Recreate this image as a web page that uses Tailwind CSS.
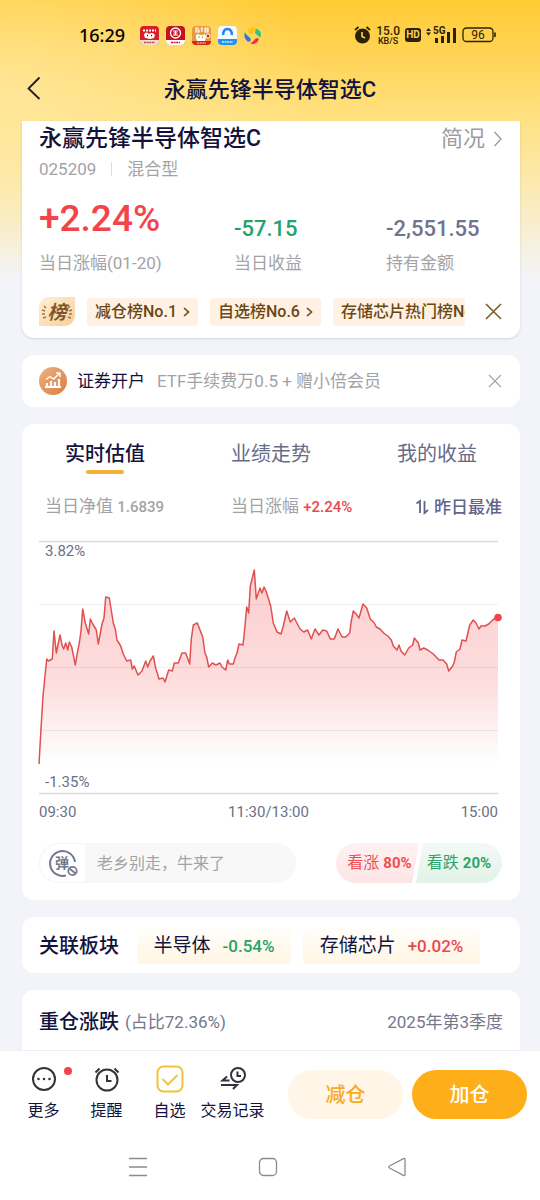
<!DOCTYPE html>
<html lang="zh-CN">
<head>
  <meta charset="UTF-8" />
  <meta name="viewport" content="width=device-width, initial-scale=1.0" />
  <title>永赢先锋半导体智选C</title>
  <script src="https://cdn.jsdelivr.net/npm/@tailwindcss/browser@4"></script>
</head>
<body class="bg-[#f3f4fa] font-['Roboto','Noto_Sans_CJK_SC',sans-serif] text-[#12123c]">
<div class="min-h-screen flex flex-col bg-[radial-gradient(ellipse_320px_180px_at_0px_90px,#ffeaa8b3,#ffeaa800),linear-gradient(to_bottom,#ffcb35_0px,#ffd558_60px,#ffe283_120px,#fbeab4_190px,#f3f4fa_280px)]">

  <!-- status bar -->
  <div class="h-[58px] pt-3 pl-[79px] pr-11 flex items-center justify-between text-black">
    <div class="flex items-center gap-[7px]">
      <span class="font-['Noto_Sans'] font-medium text-[18px] leading-6 mr-2">16:29</span>
      <svg width="19" height="19" viewBox="0 0 19 19">
        <rect width="19" height="19" rx="4" fill="#d81f26"/>
        <path d="M0 14h19v1a4 4 0 0 1-4 4H4a4 4 0 0 1-4-4z" fill="#f6dfca"/>
        <path d="M3 4.500h13" stroke="#fff" stroke-width="2" stroke-dasharray="2 1"/>
        <path d="M4 9c1-3 3-3 5-1 2-2 5-1 6 1l-1 3-4 1-5-1z" fill="#fff"/>
        <path d="M7 9.500h1M11 9.500h1" stroke="#222" stroke-width="1.500"/>
        <path d="M4 16.500h11" stroke="#b54a35" stroke-width="1.500" stroke-dasharray="2 .6"/>
      </svg>
      <svg width="19" height="19" viewBox="0 0 19 19">
        <rect width="19" height="19" rx="4" fill="#c11420"/>
        <path d="M0 14h19v1a4 4 0 0 1-4 4H4a4 4 0 0 1-4-4z" fill="#fff"/>
        <circle cx="9.500" cy="7" r="5" fill="none" stroke="#fff" stroke-width="1.300"/>
        <path d="M7 5h5M7 9h5M9.500 5v4M7.500 7h4" stroke="#fff" stroke-width="1.100"/>
        <path d="M5 16.500h9" stroke="#c11420" stroke-width="1.500" stroke-dasharray="2 .6"/>
      </svg>
      <svg width="19" height="19" viewBox="0 0 19 19">
        <rect width="19" height="19" rx="4" fill="#e79b3d"/>
        <path d="M0 15h19a4 4 0 0 1-4 4H4a4 4 0 0 1-4-4z" fill="#d3261c"/>
        <path d="M7 2H4v4h3v-2H4M9 3l1-1v4M13 2h3v4h-3zM13 4h3" fill="none" stroke="#fff" stroke-width="1.200"/>
        <path d="M4 9l2-1 2 1h3l2-1 1 3-1 4H5l-1-3z" fill="#fff"/>
        <path d="M6.500 11h1M10 11h1" stroke="#333" stroke-width="1.200"/>
        <circle cx="16" cy="10" r="2" fill="#d3261c" stroke="#fff"/>
        <path d="M5 17h9" stroke="#ffe3a0" stroke-width="1.200" stroke-dasharray="2 .6"/>
      </svg>
      <svg width="19" height="19" viewBox="0 0 19 19">
        <rect width="19" height="19" rx="4" fill="#f3faff"/>
        <path d="M0 13h19v2a4 4 0 0 1-4 4H4a4 4 0 0 1-4-4z" fill="#2094ee"/>
        <path d="M5.500 9a4.300 4.300 0 1 1 8 0" fill="none" stroke="#2386e8" stroke-width="2.500"/>
        <path d="M4 16h11" stroke="#cfeaff" stroke-width="1.500" stroke-dasharray="2 .6"/>
      </svg>
      <svg width="19" height="19" viewBox="0 0 19 19">
        <path d="M3 5c3-5 8-5 11-2-4 0-5 5-8 4z" fill="#ffc414"/>
        <path d="M12 3c5 1 6 5 4 9-1-3-5-3-5-6z" fill="#29c58b"/>
        <path d="M15 13c-2 5-6 6-9 4 4-1 4-4 7-5z" fill="#ef2c4a"/>
        <path d="M1 6c1 4 5 4 6 8-1 2-3 2-4 1-3-3-3-6-2-9z" fill="#2778e8"/>
      </svg>
    </div>
    <div class="flex items-center gap-[5px] text-[#2b2308]">
      <svg width="17" height="18" viewBox="0 0 17 18">
        <circle cx="8.500" cy="10" r="7.500" fill="currentColor"/>
        <path d="M1 4l3.500-3M16 4l-3.500-3" stroke="currentColor" stroke-width="1.800"/>
        <path d="M8 6v4.500l3 1.500" fill="none" stroke="#ffd252" stroke-width="1.600"/>
      </svg>
      <div class="flex flex-col items-center font-medium">
        <span class="text-xs leading-3">15.0</span>
        <span class="text-[9px] leading-[9px]">KB/S</span>
      </div>
      <span class="bg-[#2b2308] text-[#ffd252] rounded-[3px] w-4 h-[14px] text-[10px] leading-[14px] font-bold text-center">HD</span>
      <svg width="31" height="18" viewBox="0 0 31 18" fill="currentColor">
        <path d="M0 5l2.500-3L5 5zM0 6.500l2.500 3 2.500-3z"/>
        <text x="7" y="8" font-size="10" font-weight="700" font-family="Roboto">5G</text>
        <path d="M9 12h3v5H9zM15 10h3v7h-3zM21 6h3v11h-3zM27 2h3v15h-3z"/>
      </svg>
      <svg width="34" height="16" viewBox="0 0 34 16">
        <rect x="1" y="1" width="30" height="13.500" rx="3.500" fill="none" stroke="currentColor" stroke-width="1.300"/>
        <path d="M33 5.500v4.500" stroke="currentColor" stroke-width="1.600"/>
        <text x="16" y="12" font-size="12" text-anchor="middle" fill="currentColor" font-family="Roboto">96</text>
      </svg>
    </div>
  </div>

  <!-- title bar -->
  <header class="relative h-[63px] flex items-center justify-center">
    <button aria-label="返回" class="absolute left-6 top-[18px]">
      <svg width="20" height="24" viewBox="0 0 20 24" fill="none" stroke="#1b1a35" stroke-width="1.800"><path d="M15.500 1.500L4.500 12.500l11 10.500"/></svg>
    </button>
    <h1 class="text-[22px] leading-7 font-medium">永赢先锋半导体智选C</h1>
  </header>

  <main class="flex-1 flex flex-col gap-[17px] pl-[22px] pr-5">

    <!-- fund summary -->
    <section class="bg-white rounded-b-xl shadow-sm px-[17px] pb-3 h-[217px] flex flex-col">
      <div class="flex items-center justify-between h-9">
        <h2 class="text-[23px] leading-8 font-medium">永赢先锋半导体智选C</h2>
        <a href="#" class="flex items-center gap-2 text-[22px] leading-8 text-[#9c9ca0]">简况
          <svg width="10" height="16" viewBox="0 0 10 16" fill="none" stroke="#9c9ca0" stroke-width="1.400"><path d="M1.500 1l6.500 7-6.500 7"/></svg>
        </a>
      </div>
      <div class="flex items-center text-[17px] leading-6 text-[#a3a3a6]">
        <span>025209</span>
        <span class="w-px h-3.5 bg-[#dddddf] mx-[15px]"></span>
        <span>混合型</span>
      </div>
      <div class="grid grid-cols-[195px_152px_1fr] mt-[10px]">
        <div>
          <p class="text-[37px] leading-[56px] font-medium text-[#f4444a]">+2.24%</p>
          <p class="text-[17px] leading-6 text-[#a3a3a6] mt-1">当日涨幅(01-20)</p>
        </div>
        <div>
          <p class="pt-5 text-[22px] leading-9 font-medium text-[#22a468]">-57.15</p>
          <p class="text-[17px] leading-6 text-[#a3a3a6] mt-1">当日收益</p>
        </div>
        <div>
          <p class="pt-5 text-[22px] leading-9 font-medium text-[#70728f]">-2,551.55</p>
          <p class="text-[17px] leading-6 text-[#a3a3a6] mt-1">持有金额</p>
        </div>
      </div>
      <div class="mt-auto flex items-center">
        <svg class="shrink-0" width="36" height="29" viewBox="0 0 36 29">
          <defs><linearGradient id="rank" x1="0" y1="0" x2="1" y2="1"><stop offset="0" stop-color="#fff0d8"/><stop offset="1" stop-color="#f7cf97"/></linearGradient></defs>
          <path d="M10 0h26v18a11 11 0 0 1-11 11H0V10A10 10 0 0 1 10 0z" fill="url(#rank)"/>
          <path d="M5 9l2 2M3 13l3 1M3 17h3M4 21l3-1M31 9l-2 2M33 13l-3 1M33 17h-3M32 21l-3-1" stroke="#a27640" stroke-width="1.500"/>
          <text x="18" y="22" font-size="19" font-weight="700" font-style="italic" text-anchor="middle" fill="#7d5628" font-family="Noto Sans CJK SC">榜</text>
        </svg>
        <div class="flex-1 min-w-0 overflow-hidden flex gap-3 ml-3 text-base leading-7 font-medium text-[#6b4714]">
          <a href="#" class="shrink-0 flex items-center gap-1.5 bg-[#fff1e3] rounded px-2 h-7">减仓榜No.1 <svg width="7" height="10" viewBox="0 0 7 10" fill="none" stroke="currentColor" stroke-width="1.600"><path d="M1 1l4.500 4L1 9"/></svg></a>
          <a href="#" class="shrink-0 flex items-center gap-1.5 bg-[#fff1e3] rounded px-2 h-7">自选榜No.6 <svg width="7" height="10" viewBox="0 0 7 10" fill="none" stroke="currentColor" stroke-width="1.600"><path d="M1 1l4.500 4L1 9"/></svg></a>
          <a href="#" class="shrink-0 flex items-center bg-[#fff1e3] rounded px-2 h-7">存储芯片热门榜No.2</a>
        </div>
        <button aria-label="关闭榜单" class="ml-5 mr-px"><svg width="17" height="17" viewBox="0 0 17 17" stroke="#7d5d2c" stroke-width="1.600"><path d="M1 1l15 15M16 1L1 16"/></svg></button>
      </div>
    </section>

    <!-- account banner -->
    <section class="bg-white rounded-xl px-[17px] h-[52px] flex items-center">
      <svg width="28" height="28" viewBox="0 0 28 28">
        <defs><linearGradient id="coin" x1="0" y1="0" x2="1" y2="1"><stop offset="0" stop-color="#efb083"/><stop offset="1" stop-color="#d97f3d"/></linearGradient></defs>
        <circle cx="14" cy="14" r="14" fill="url(#coin)"/>
        <path d="M6 20h16M8 19v-3M12 19v-5M16 19v-4M20 19v-7" stroke="#fff" stroke-width="2.200"/>
        <path d="M7 12.500l4-3 3.500 2.500 6-5.500M17 6h4v4" fill="none" stroke="#fff" stroke-width="1.400"/>
      </svg>
      <span class="ml-2.5 text-[17px] leading-6">证券开户</span>
      <span class="ml-3 text-[17px] leading-6 text-[#a3a3a6]">ETF手续费万0.5 + 赠小倍会员</span>
      <button aria-label="关闭广告" class="ml-auto mr-px"><svg width="14" height="14" viewBox="0 0 14 14" stroke="#a5a5a8" stroke-width="1.200"><path d="M1 1l12 12M13 1L1 13"/></svg></button>
    </section>

    <!-- realtime chart -->
    <section class="bg-white rounded-xl pb-[17px]">
      <nav class="grid grid-cols-3 text-xl leading-7 text-[#686b88]">
        <button class="pt-4 flex flex-col items-center gap-0.5 font-medium text-[#12123c]">实时估值<span class="w-[38px] h-1 rounded-sm bg-[#f4b133]"></span></button>
        <button class="pt-4 flex flex-col items-center">业绩走势</button>
        <button class="pt-4 flex flex-col items-center">我的收益</button>
      </nav>
      <div class="mt-5 pr-[18px] grid grid-cols-[186px_1fr_auto] pl-[23px] text-[17px] leading-6 text-[#a3a3a6]">
        <span>当日净值 <b class="font-medium text-[15px]">1.6839</b></span>
        <span>当日涨幅 <b class="font-medium text-[15px] text-[#ea484c]">+2.24%</b></span>
        <button class="flex items-center gap-1 font-medium text-[#62658a]">
          <svg width="15" height="16" viewBox="0 0 15 16" fill="none" stroke="currentColor" stroke-width="1.800"><path d="M1.500 4.500L5 2v12M9.500 2v12l3.500-3"/></svg>
          昨日最准
        </button>
      </div>
      <div class="relative mt-[22px] ml-[17px] mr-[22px] text-[15px] leading-5 text-[#6c6f86]">
        <svg class="block w-full h-auto overflow-visible" viewBox="0 0 459 254" fill="none">
          <defs><linearGradient id="fade" gradientUnits="userSpaceOnUse" x1="0" y1="30" x2="0" y2="222"><stop offset="0" stop-color="#f5484d" stop-opacity=".27"/><stop offset=".6" stop-color="#f5484d" stop-opacity=".18"/><stop offset="1" stop-color="#f5484d" stop-opacity="0"/></linearGradient></defs>
          <polygon id="area" fill="url(#fade)"/>
          <path d="M0 63.500h459M0 126.500h459M0 189.500h459" stroke="#000" stroke-opacity=".06"/>
          <path d="M0 .5h459M0 252.500h459" stroke="#dcdce0" stroke-width="1.400"/>
          <polyline id="line" stroke="#e0504f" stroke-width="1.500" stroke-linejoin="round"/>
          <circle cx="459" cy="76.500" r="3.800" fill="#f4444a"/>
        </svg>
        <span class="absolute left-1.5 top-0">3.82%</span>
        <span class="absolute left-1.5 bottom-[3px]">-1.35%</span>
      </div>
      <div class="mt-[7px] ml-[17px] mr-[22px] flex justify-between text-[15px] leading-5 text-[#6c6f86]">
        <span>09:30</span><span>11:30/13:00</span><span>15:00</span>
      </div>
      <div class="mt-[21px] pl-[17px] pr-[18px] flex items-center justify-between">
        <div class="flex w-[257px] h-10 rounded-full bg-[#f8f8f8] overflow-hidden">
          <button aria-label="弹幕开关" class="w-[46px] bg-white border border-r-0 border-[#f5f5f6] rounded-l-full flex items-center justify-center">
            <svg width="30" height="28" viewBox="0 0 30 28" fill="none" stroke="#74788f">
              <path d="M27 13A12.500 12.500 0 1 0 18 26.500" stroke-width="2"/>
              <text x="14" y="19" font-size="14" font-weight="700" text-anchor="middle" fill="#74788f" stroke="none" font-family="Noto Sans CJK SC">弹</text>
              <circle cx="24.500" cy="22" r="4.200" stroke-width="1.800" fill="#fff"/><path d="M21.500 19.500l6 5" stroke-width="1.800"/>
            </svg>
          </button>
          <input type="text" aria-label="弹幕" placeholder="老乡别走，牛来了" class="flex-1 min-w-0 pl-3 pt-0.5 text-base outline-none placeholder:text-[#a3a3a6]">
        </div>
        <div class="flex text-base leading-10">
          <button class="w-[83px] h-10 bg-linear-to-b from-[#fff2f2] to-[#fde4e5] rounded-l-full [clip-path:polygon(0_0,100%_0,calc(100%-7px)_100%,0_100%)] text-[#f04f52] pl-1">看涨 <b class="font-bold text-[15px]">80%</b></button>
          <button class="w-[86px] -ml-[3px] h-10 bg-linear-to-b from-[#f2f9f4] to-[#e2f3e8] rounded-r-full [clip-path:polygon(7px_0,100%_0,100%_100%,0_100%)] text-[#2ba56c]">看跌 <b class="font-bold text-[15px]">20%</b></button>
        </div>
      </div>
    </section>

    <!-- related sectors -->
    <section class="bg-white rounded-xl px-[17px] h-14 pt-0.5 flex items-center text-[19px] leading-9">
      <h3 class="text-xl font-medium">关联板块</h3>
      <a href="#" class="ml-[18px] w-[154px] h-9 rounded flex items-center justify-center gap-3 bg-linear-to-b from-[#fffefb] to-[#fff6e4]">半导体 <b class="font-medium text-[17px] text-[#22a468]">-0.54%</b></a>
      <a href="#" class="ml-3 w-[177px] h-9 rounded flex items-center justify-center gap-3 bg-linear-to-b from-[#fffefb] to-[#fff6e4]">存储芯片 <b class="font-medium text-[17px] text-[#ea484c]">+0.02%</b></a>
    </section>

    <!-- holdings -->
    <section class="bg-white rounded-t-xl px-[17px] pt-[18px] flex-1 flex items-start text-[17px] leading-7 text-[#74778d]">
      <h3 class="text-xl leading-7 font-medium text-[#12123c] mr-1.5">重仓涨跌</h3>
      <span>(占比72.36%)</span>
      <span class="ml-auto">2025年第3季度</span>
    </section>
  </main>

  <footer class="bg-white border-t border-[#f0f0f2]">
    <div class="h-[82px] pl-3 pr-[13px] pt-1 flex items-center">
      <a href="#" class="relative w-[63px] flex flex-col items-center gap-1.5 text-base leading-6">
        <svg width="28" height="28" viewBox="0 0 28 28" fill="none" stroke="#333338" stroke-width="2"><circle cx="14" cy="14" r="11"/><path d="M8.500 14h.01M14 14h.01M19.500 14h.01" stroke-width="2.600" stroke-linecap="round"/></svg>
        <span>更多</span>
        <span class="absolute right-[3px] top-0.5 size-2 rounded-full bg-[#f4444a]"></span>
      </a>
      <a href="#" class="w-[63px] flex flex-col items-center gap-1.5 text-base leading-6">
        <svg width="28" height="28" viewBox="0 0 28 28" fill="none" stroke="#333338" stroke-width="2"><circle cx="14" cy="15" r="10.500"/><path d="M14 10v6h4.500M2.500 7.500l4-4M25.500 7.500l-4-4"/></svg>
        <span>提醒</span>
      </a>
      <a href="#" class="w-[63px] flex flex-col items-center gap-1.5 text-base leading-6">
        <svg width="28" height="28" viewBox="0 0 28 28" fill="none" stroke="#f0c33c" stroke-width="2"><rect x="1.500" y="1.500" width="25" height="25" rx="6"/><path d="M6.500 14l5.500 5.500L21.500 10"/></svg>
        <span>自选</span>
      </a>
      <a href="#" class="w-[63px] flex flex-col items-center gap-1.5 text-base leading-6">
        <svg width="28" height="28" viewBox="0 0 28 28" fill="none" stroke="#333338" stroke-width="2"><circle cx="19" cy="10" r="7"/><path d="M18.500 6.500V11h3.500M10.500 15.500H3.500l4.500-4M2 20h16l-4 4"/></svg>
        <span class="whitespace-nowrap">交易记录</span>
      </a>
      <div class="flex-1 grid grid-cols-2 gap-[9px] ml-6 text-xl font-medium">
        <button class="h-[49px] pt-0.5 rounded-full bg-[#fff6e7] text-[#f7ab23]">减仓</button>
        <button class="h-[49px] pt-0.5 rounded-full bg-[#fdae18] text-white">加仓</button>
      </div>
    </div>
    <!-- system navigation -->
    <div class="h-[67px] pr-[5px] flex justify-center">
      <div class="w-[279px] flex items-center justify-between">
        <svg width="20" height="20" viewBox="0 0 20 20" stroke="#8b8b8b" stroke-width="1.300"><path d="M1 1.500h18M1 10h18M1 18.500h18"/></svg>
        <svg width="20" height="20" viewBox="0 0 20 20" fill="none" stroke="#8b8b8b" stroke-width="1.300"><rect x="1.500" y="1.500" width="17" height="17" rx="4"/></svg>
        <svg width="20" height="20" viewBox="0 0 20 20" fill="none" stroke="#8b8b8b" stroke-width="1.300"><path d="M18 2.500v15q0 1.500-1.500.8L2.500 11q-1.500-1 0-2L16.500 1.700q1.500-.7 1.500.8z"/></svg>
      </div>
    </div>
  </footer>
</div>

<script>
  // chart samples as x,y pairs in viewBox units
  const samples = '0,223 2,188 4,155 7.7,118 9.3,120 13.3,118 15,90 17.3,112 21,94 23,104 24.7,108 26.7,102 28.7,109 30.3,101 32.7,106 36.3,124 38.3,112 40.3,102 42,90 43.7,68 46.3,82 49.7,93 51.3,78 54.3,84 57.3,89 59.3,103 63,83 65,77 66.7,56 70.3,57 74.3,82 76.3,88 78,99 81.7,105 84.3,113 87.7,120 91.7,119 93.3,128 95.3,125 99,134 103,130 106.7,120 108.7,126 111,120 114.3,115 116.7,127 120,138 124,137 126,141 129.7,129 133.3,130 135.3,122 139.3,122 143,112 146.7,112 150.7,123 152.3,98 154.3,84 158.3,82 163.7,96 166,112 167.7,116 169.7,126 173.3,122 177,124 181,122 183,126 186.7,129 188.7,119 190.3,123 194.3,123 196.3,116 198,112 200,103 204,104 205.7,88 207.7,66 209.7,72 211.3,45 215.3,29 217.3,58 221,47 223,52 225,46 227,50 231.7,65 234.3,82 238,91 242,93 244.3,85 247.7,70 251.3,81 255.3,77 261,88 264.7,91 268.7,89 272.3,98 276,88 280,94 283.7,89 287.7,90 291.3,98 295.3,98 299,88 303,96 306.7,96 310.7,92 312.3,80 314.3,70 318,74 320,77 324,63 327.7,67 331.3,78 335.3,82 337.3,86 341,88 344.7,92 348.7,95 352.3,99 354.3,105 358,109 360,104 362,110 365.7,114 369.7,107 373.7,104 375.3,97 379.3,102 381,109 384.7,107 388.7,109 394.3,113 400,119 404,119 407.7,123 409.7,130 413.7,125 415.3,121 417.3,111 421,108 423,99 427,100 430.7,84 434.3,79 437,82 440,88 442,85 446,85 449.7,83 453.7,79 459,76';

  document.getElementById('line').setAttribute('points', samples);
  document.getElementById('area').setAttribute('points', samples + ' 459,223 0,223');
</script>
</body>
</html>
